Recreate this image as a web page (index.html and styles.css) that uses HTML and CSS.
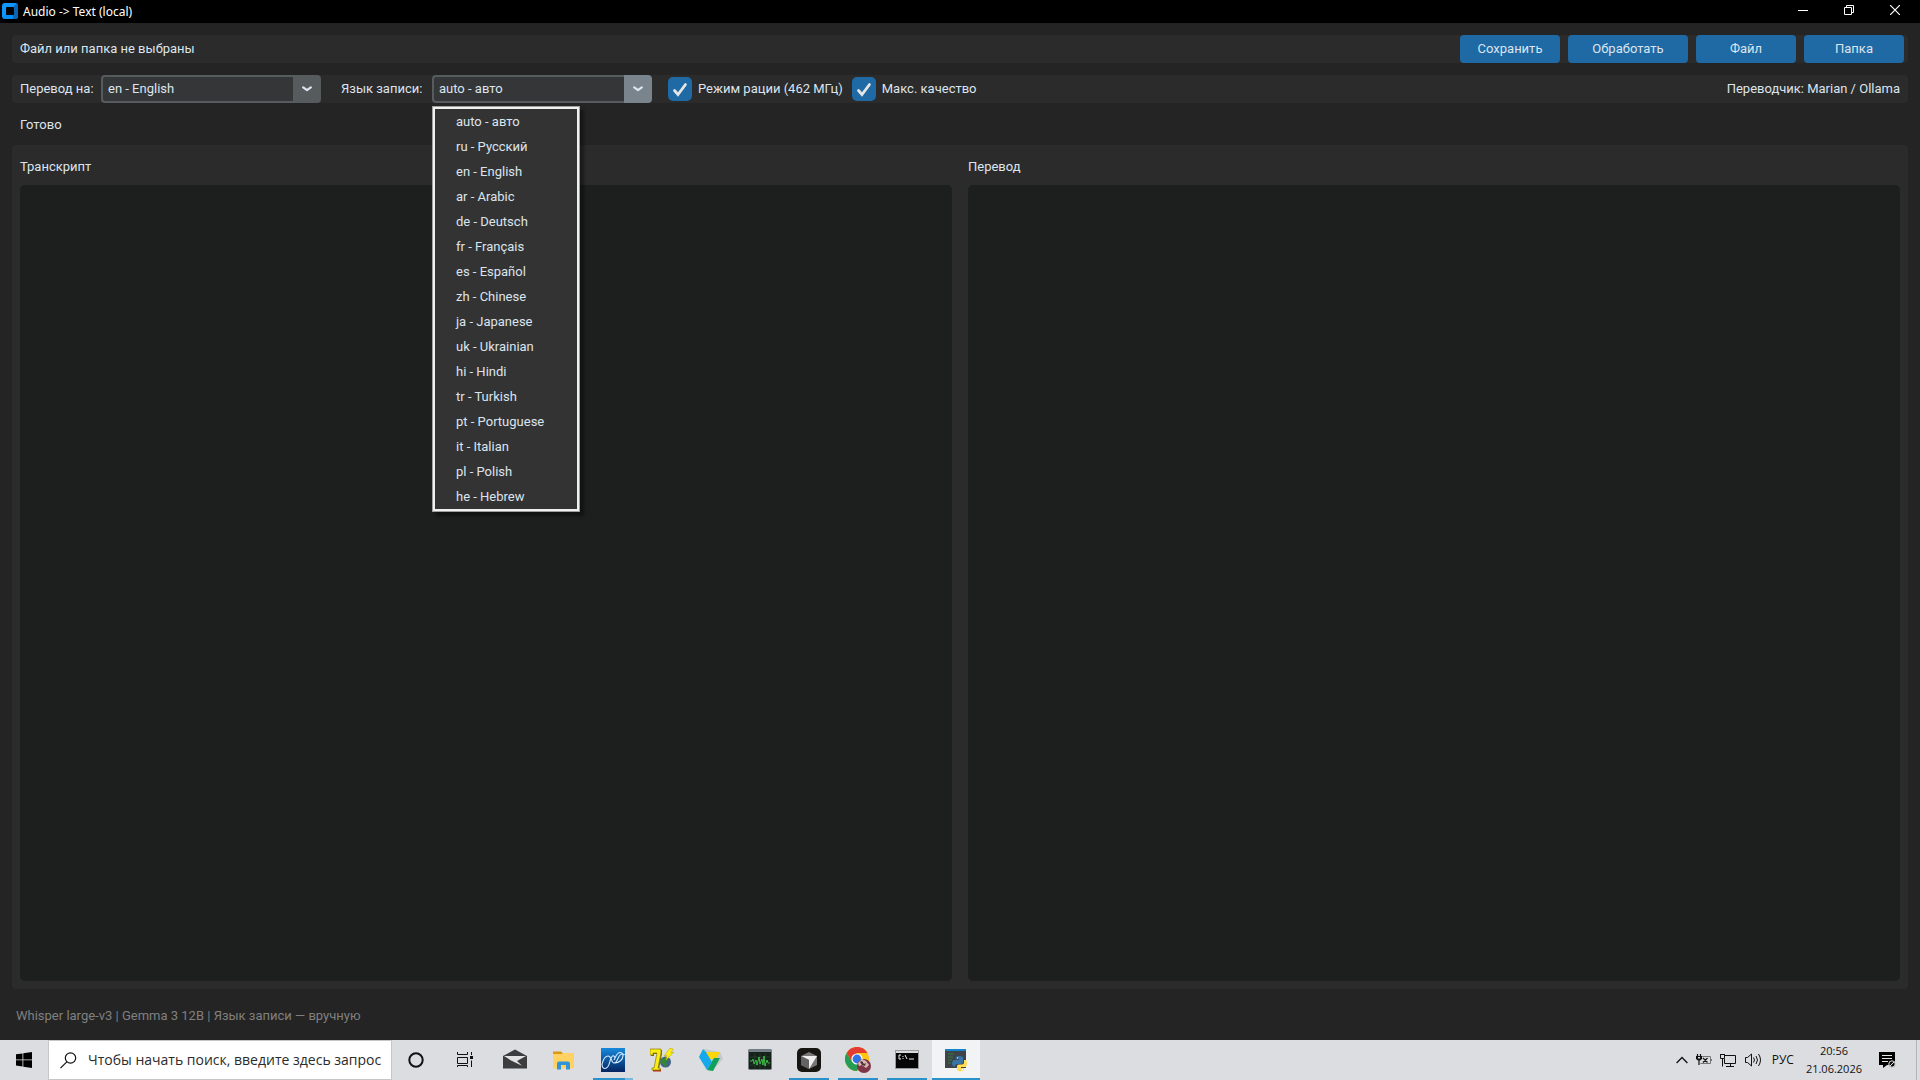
FILE: index.html
```html
<!DOCTYPE html>
<html lang="ru">
<head>
<meta charset="utf-8">
<meta name="viewport" content="width=device-width, initial-scale=1">
<title>Audio -&gt; Text (local)</title>
<link rel="stylesheet" href="styles.css">
</head>
<body>
<header class="titlebar">
  <svg class="app-icon" viewBox="0 0 16 16" aria-hidden="true"><rect width="16" height="16" rx="3" fill="#1097ff"/><path d="M12 2.500L15 1Q16 2 16 3v10q0 3-3 3H3l-1-1 3-3h7z" fill="#0866b5"/><path d="M2 13l3-2h6v5H3q-2 0-2-2z" fill="#078df3"/><rect x="4" y="4" width="8" height="8" rx="1" fill="#000"/></svg>
  <h1 class="window-title">Audio -&gt; Text (local)</h1>
  <div class="window-buttons">
    <button class="window-button" type="button" aria-label="Свернуть"><svg width="10" height="10" viewBox="0 0 10 10"><path d="M0 5.500h10" stroke="#fff"/></svg></button>
    <button class="window-button" type="button" aria-label="Восстановить"><svg width="10" height="10" viewBox="0 0 10 10" fill="none" stroke="#fff"><path d="M.5 2.500h7v7h-7zM2.500 2.500v-2h7v7h-2"/></svg></button>
    <button class="window-button" type="button" aria-label="Закрыть"><svg width="10" height="10" viewBox="0 0 10 10"><path d="M0 0l10 10M10 0L0 10" stroke="#fff" stroke-width="1.200"/></svg></button>
  </div>
</header>

<main class="app">
  <section class="bar file-bar">
    <span class="file-name">Файл или папка не выбраны</span>
    <button class="action" type="button">Сохранить</button>
    <button class="action action-wide" type="button">Обработать</button>
    <button class="action" type="button">Файл</button>
    <button class="action" type="button">Папка</button>
  </section>

  <section class="bar options-bar">
    <label class="target-label" for="target">Перевод на:</label>
    <div class="combo">
      <input class="combo-input" id="target" type="text" value="en - English">
      <button class="combo-button" type="button" aria-label="Выбрать язык перевода"><svg width="10" height="6" viewBox="0 0 10 6"><path d="M1.200 1.400L5 4.200 8.800 1.400" fill="none" stroke="#dce4ee" stroke-width="2.200" stroke-linecap="round" stroke-linejoin="round"/></svg></button>
    </div>
    <label class="source-label" for="source">Язык записи:</label>
    <div class="combo">
      <input class="combo-input" id="source" type="text" value="auto - авто">
      <button class="combo-button combo-button-active" type="button" aria-label="Выбрать язык записи" aria-expanded="true"><svg width="10" height="6" viewBox="0 0 10 6"><path d="M1.200 1.400L5 4.200 8.800 1.400" fill="none" stroke="#dce4ee" stroke-width="2.200" stroke-linecap="round" stroke-linejoin="round"/></svg></button>
      <ul class="menu" role="listbox" aria-label="Язык записи">
        <li class="menu-item" role="option">auto - авто</li>
        <li class="menu-item" role="option">ru - Русский</li>
        <li class="menu-item" role="option">en - English</li>
        <li class="menu-item" role="option">ar - Arabic</li>
        <li class="menu-item" role="option">de - Deutsch</li>
        <li class="menu-item" role="option">fr - Français</li>
        <li class="menu-item" role="option">es - Español</li>
        <li class="menu-item" role="option">zh - Chinese</li>
        <li class="menu-item" role="option">ja - Japanese</li>
        <li class="menu-item" role="option">uk - Ukrainian</li>
        <li class="menu-item" role="option">hi - Hindi</li>
        <li class="menu-item" role="option">tr - Turkish</li>
        <li class="menu-item" role="option">pt - Portuguese</li>
        <li class="menu-item" role="option">it - Italian</li>
        <li class="menu-item" role="option">pl - Polish</li>
        <li class="menu-item" role="option">he - Hebrew</li>
      </ul>
    </div>
    <div class="checks">
      <label class="check"><span class="tick"><input class="tick-box" type="checkbox" checked><svg class="tick-mark" viewBox="0 0 24 24"><path d="M6.500 13.500L10 17.500 17.500 7.500" fill="none" stroke="#e5e5e5" stroke-width="2.800" stroke-linecap="round"/></svg></span>Режим рации (462 МГц)</label>
      <label class="check"><span class="tick"><input class="tick-box" type="checkbox" checked><svg class="tick-mark" viewBox="0 0 24 24"><path d="M6.500 13.500L10 17.500 17.500 7.500" fill="none" stroke="#e5e5e5" stroke-width="2.800" stroke-linecap="round"/></svg></span>Макс. качество</label>
    </div>
    <span class="engine">Переводчик: Marian / Ollama</span>
  </section>

  <p class="status">Готово</p>

  <section class="panels">
    <div class="panel">
      <label class="panel-label" for="transcript">Транскрипт</label>
      <textarea class="panel-text" id="transcript"></textarea>
    </div>
    <div class="panel">
      <label class="panel-label" for="translation">Перевод</label>
      <textarea class="panel-text" id="translation"></textarea>
    </div>
  </section>

  <p class="footnote">Whisper large-v3 | Gemma 3 12B | Язык записи — вручную</p>
</main>

<footer class="taskbar">
  <button class="start" type="button" aria-label="Пуск"><svg width="16" height="16" viewBox="0 0 16 16"><path d="M0 2.300L6.500 1.400v6.100H0zM7.300 1.300L16 0v7.500H7.300zM0 8.300h6.500v6.200L0 13.600zM7.300 8.300H16V16l-8.700-1.300z"/></svg></button>
  <label class="search">
    <svg width="17" height="17" viewBox="0 0 17 17" fill="none" stroke="#111" stroke-width="1.200"><circle cx="10.500" cy="6" r="5.200"/><path d="M6.800 9.800L.5 16.200"/></svg>
    <input class="search-input" type="text" placeholder="Чтобы начать поиск, введите здесь запрос" aria-label="Поиск">
  </label>
  <nav class="tasks" aria-label="Панель задач">
    <button class="task" type="button" aria-label="Кортана"><svg width="24" height="24" viewBox="0 0 24 24"><circle cx="11" cy="12" r="6.700" fill="none" stroke="#111" stroke-width="2"/></svg></button>
    <button class="task" type="button" aria-label="Представление задач"><svg width="24" height="24" viewBox="0 0 24 24" fill="none" stroke="#111"><path d="M3.500 4v2.500h10V4M3.500 9.500h10v6h-10zM3.500 19v-1.500h10V19M17.500 4v3M17.500 12.500V19"/><path d="M16 8h3v3h-3z" fill="#111" stroke="none"/></svg></button>
    <button class="task" type="button" aria-label="Почта"><svg width="24" height="24" viewBox="0 0 24 24"><path d="M0 8L12 1.500 24 8v12.500H0z" fill="#3d3d3f"/><path d="M1 8h22l-9 5 5 4.800L8 12.500z" fill="#e3e3e5"/></svg></button>
    <button class="task" type="button" aria-label="Проводник"><svg width="24" height="24" viewBox="0 0 24 24"><path d="M1 3.500h8l2 2H21v5H1z" fill="#dc980e"/><path d="M1 6h9l1-1h11v15.500H1z" fill="#ffd263"/><path d="M5 21.500v-6q0-2 2-2h9q2 0 2 2v6h-4V17H9v4.500z" fill="#3094d8"/></svg></button>
    <button class="task task-open task-group" type="button" aria-label="Осциллограф"><svg width="24" height="24" viewBox="0 0 24 24"><defs><linearGradient id="wave" x1="0" y1="0" x2="0" y2="1"><stop offset="0" stop-color="#1789dc"/><stop offset="1" stop-color="#052360"/></linearGradient></defs><path fill="url(#wave)" d="M0 0h24v24H0z"/><path d="M1 16C2 13 3 8 7 8c4 0 3 7 6 7 4 0 4-9 8-9 1 0 2 0 2.500 1M1 16c0 3 1 4.500 3 4.500 5 0 4-8 7-12 1-1.500 3-.5 3 2M13 12c2-4 3-7.500 6-7.500 2 0 3 1 3 3 0 4-4 7.500-8 7.500" fill="none" stroke="#d4ecff" stroke-width="1.100"/></svg></button>
    <button class="task" type="button" aria-label="Семёрка"><svg width="24" height="24" viewBox="0 0 24 24"><path d="M1 2h11v4L9 21h2v2H3v-2h2L8 6H4v2H1z" fill="#7b6a00"/><path d="M0 1h11v4L8 20h2v2H2v-2h2L7 5H3v2H0z" fill="#f9ed13" stroke="#8b7900" stroke-width=".7"/><path d="M3 22.500h8v1H3z" fill="#c51e19"/><circle cx="15.500" cy="14" r="5.500" fill="#42618c"/><path d="M12 11l4-2 3 4-3 1 1 3-3 2-1-3-3-1z" fill="#338832"/><path d="M20 0l3 1-2 4 3-1-8 8 1-5-3 1z" fill="#ffee16" stroke="#b4a400" stroke-width=".5"/></svg></button>
    <button class="task" type="button" aria-label="Диск"><svg width="24" height="24" viewBox="0 0 24 24"><path d="M5 1l16 3 3 7-11 12-5-1L0 9z" fill="#c3c8ca"/><path d="M5 4h16l-4 7h-7z" fill="#fbd608"/><path d="M15 10h6l-7 13-6-1z" fill="#0fa05a"/><path d="M4 1l3 3 6 10-5 8L0 9z" fill="#15a9eb"/></svg></button>
    <button class="task" type="button" aria-label="Монитор"><svg width="24" height="24" viewBox="0 0 24 24"><rect x=".5" y="1.500" width="23" height="20" rx="1" fill="#152119" stroke="#747b80"/><path d="M1 2h22v2H1z" fill="#74808a"/><path d="M2 9h20M2 13h20M2 17h20M7 5v16M12 5v16M17 5v16" stroke="#31523a" stroke-width=".5"/><path d="M2 13h2l1-2 1 5 2-4 1 5 2-8 1 7 2-5 1 6 1-9 1 10 2-6 1 3h2" fill="none" stroke="#46d851" stroke-width=".8"/></svg></button>
    <button class="task task-open" type="button" aria-label="Редактор"><svg width="24" height="24" viewBox="0 0 24 24"><rect width="24" height="24" rx="5" fill="#171612"/><path d="M12 4l8 4v9l-8 4-8-4V8z" fill="#777"/><path d="M4 8h16l-8 13v-9z" fill="#eee"/><path d="M4 8l8 4v9l-8-4z" fill="#636363"/></svg></button>
    <button class="task task-open" type="button" aria-label="Браузер"><svg width="26" height="26" viewBox="0 0 26 26"><circle cx="12" cy="12" r="12" fill="#ffc511"/><path d="M1.600 6A12 12 0 0 1 22.500 6H12L7 15z" fill="#e43d30"/><path d="M1.600 6A12 12 0 0 0 12 24l4-9H7z" fill="#269d52"/><circle cx="12" cy="12" r="5.600" fill="#fff"/><circle cx="12" cy="12" r="4.400" fill="#3274e8"/><circle cx="19" cy="19" r="7" fill="#7d3547"/><path d="M13 16l4-4 4 2 3 4-3 3-4-3-3 1z" fill="#d9b8b1"/><path d="M15 15l2-1 2 3 2-1-1 3-3-1z" fill="#4c333b"/></svg></button>
    <button class="task task-open" type="button" aria-label="Командная строка"><svg width="24" height="24" viewBox="0 0 24 24"><rect x=".5" y="2.500" width="23" height="18" fill="#050505" stroke="#999"/><path d="M1 3h22v2H1z" fill="#d9dadb"/><path d="M6 7H4v4h2M8 8v1M8 10v1M10 7l2 4M14 11h5" fill="none" stroke="#eee"/></svg></button>
    <button class="task task-open task-current" type="button" aria-label="Audio -&gt; Text"><svg width="24" height="24" viewBox="0 0 24 24"><path d="M1 1h21v19H1z" fill="#3d444a"/><path d="M1 1h21v2H1z" fill="#1683ce"/><path d="M4 6h6M4 9h5M4 12h4M4 15h3" stroke="#397947"/><path d="M12 9q3-2 7 0v5q0 2-2 2h-4q-2 0-2 2.500H9.500q-3-3 0-6.500H15v-1h-3z" fill="#3774a7"/><path d="M20 12h2q2 3.500 0 7h-5v1h3v2q-4 2.500-7 0v-4q0-1.500 2-1.500h3q2 0 2-2z" fill="#ffdc50"/><path d="M13 9.500h1v1h-1zM18 21h1v1h-1z" fill="#fff"/></svg></button>
  </nav>
  <div class="tray">
    <button class="tray-button" type="button" aria-label="Скрытые значки"><svg width="12" height="8" viewBox="0 0 12 8"><path d="M.6 7L6 1.500 11.400 7" fill="none" stroke="#111" stroke-width="1.300"/></svg></button>
    <button class="tray-button" type="button" aria-label="Батарея"><svg width="16" height="12" viewBox="0 0 16 12" fill="none"><path d="M6 2.500h8.500v7H4.500M15.500 5v2" stroke="#777"/><path d="M1.500 0v2M4.500 0v2M3 6v5M7 4l4.500 4.500M11.500 4L7 8.500" stroke="#111" stroke-width="1.200"/><path d="M0 2h6v3L4 6.500H2L0 5z" fill="#111"/><path d="M2 3h2v1.500H2z" fill="#dcdde0"/></svg></button>
    <button class="tray-button" type="button" aria-label="Сеть"><svg width="17" height="15" viewBox="0 0 17 15" fill="none" stroke="#111"><path d="M5 2.500h10.500v8h-11V6M10.500 10.500v3M6 13.500h8M.5 1v4.500h4V1M0 1.500h5M2.500 6v7.500"/></svg></button>
    <button class="tray-button" type="button" aria-label="Громкость"><svg width="17" height="14" viewBox="0 0 17 14" fill="none" stroke="#111"><path d="M.5 4.500h2L6.500 1v12l-4-3.500h-2zM8.500 4.500q2 2.500 0 5M11 3q3 4 0 8M13.500 1q4 6 0 12"/></svg></button>
    <button class="tray-button lang" type="button">РУС</button>
    <time class="clock" datetime="2026-06-21T20:56"><span>20:56</span><span>21.06.2026</span></time>
    <button class="tray-button notices" type="button" aria-label="Уведомления"><svg width="17" height="16" viewBox="0 0 17 16"><path d="M0 0h16v13H8l-4 3v-3H0z"/><path d="M3 3.500h10M3 6.500h10M3 9.500h6" stroke="#e6e6e8"/><circle cx="13" cy="12" r="3.200" fill="#111" stroke="#ddd"/><path d="M11 14l4-4" stroke="#ddd"/></svg></button>
  </div>
</footer>
</body>
</html>
```
FILE: styles.css
```css
* {
  box-sizing: border-box;
}

body {
  display: flex;
  flex-direction: column;
  min-height: 100vh;
  margin: 0;
  background: #242424;
  color: #dce4ee;
  font: 13px/16px Roboto, "Noto Sans", sans-serif;
}

button,
input,
textarea {
  margin: 0;
  padding: 0;
  border: 0;
  color: inherit;
  font: inherit;
}

svg {
  display: block;
  flex: none;
}

/* Window title bar */
.titlebar {
  display: flex;
  height: 23px;
  padding-left: 2px;
  background: #000;
  color: #fff;
}

.app-icon {
  width: 16px;
  height: 16px;
  margin-top: 3px;
}

.window-title {
  flex: 1;
  margin: 0;
  padding-left: 5px;
  font: 12px/24px "Noto Sans", sans-serif;
}

.window-buttons {
  display: flex;
}

.window-button {
  display: grid;
  place-items: center;
  width: 46px;
  height: 20px;
  background: none;
}

.window-button:last-child {
  margin-right: 2px;
}

/* Application */
.app {
  display: flex;
  flex: 1;
  flex-direction: column;
  padding: 12px 12px 10px;
}

.bar {
  display: flex;
  align-items: center;
  height: 28px;
  margin-bottom: 12px;
  padding: 0 8px;
  border-radius: 4px;
  background: #2b2b2b;
}

.file-bar {
  gap: 8px;
  padding-right: 4px;
}

.file-name {
  flex: 1;
}

.action {
  width: 100px;
  height: 28px;
  border-radius: 4px;
  background: #1f6aa5;
}

.action-wide {
  width: 120px;
}

.options-bar {
  gap: 8px;
}

.target-label {
  width: 73px;
  white-space: nowrap;
}

.source-label {
  width: 83px;
  margin-left: 12px;
  white-space: nowrap;
}

.combo {
  position: relative;
  display: flex;
  width: 220px;
  height: 28px;
}

.combo-input {
  flex: 1;
  min-width: 0;
  padding: 0 5px;
  border: 2px solid #565b5e;
  border-right: 0;
  border-radius: 4px 0 0 4px;
  background: #343638;
}

.combo-button {
  display: grid;
  place-items: center;
  width: 28px;
  border-radius: 0 4px 4px 0;
  background: #565b5e;
}

.combo-button-active {
  background: #7a848d;
}

.menu {
  position: absolute;
  top: 31px;
  left: 0;
  z-index: 1;
  width: 148px;
  margin: 0;
  padding: 2px;
  border: 1px solid #a0a0a0;
  outline: 2px solid #f0f0f0;
  outline-offset: -3px;
  background: #333;
  box-shadow: 4px 4px 3px rgba(0, 0, 0, 0.4);
  list-style: none;
}

.menu-item {
  padding-left: 21px;
  line-height: 25px;
}

.checks {
  display: flex;
  flex: 1;
  gap: 9px;
  padding-left: 8px;
}

.check {
  display: flex;
  align-items: center;
  gap: 6px;
}

.tick {
  display: grid;
  width: 24px;
  height: 24px;
}

.tick-box,
.tick-mark {
  grid-area: 1 / 1;
  width: 24px;
  height: 24px;
}

.tick-box {
  appearance: none;
  border-radius: 5px;
  background: #1f6aa5;
}

.tick-mark {
  pointer-events: none;
}

.status {
  margin: 0;
  padding: 0 8px 10px;
  line-height: 20px;
}

.panels {
  display: grid;
  flex: 1;
  grid-template-columns: 1fr 1fr;
  gap: 16px;
  padding: 8px;
  border-radius: 4px;
  background: #2b2b2b;
}

.panel {
  display: flex;
  flex-direction: column;
}

.panel-label {
  padding-bottom: 4px;
  line-height: 28px;
}

.panel-text {
  flex: 1;
  padding: 8px;
  border-radius: 5px;
  background: #1d1e1e;
  resize: none;
}

.footnote {
  margin: 0;
  padding: 12px 4px 0;
  color: gray;
  line-height: 29px;
}

/* Taskbar */
.taskbar {
  display: flex;
  height: 40px;
  background: #dcdde0;
  color: #111;
  font-family: "Open Sans", "Noto Sans", sans-serif;
}

.start {
  display: grid;
  place-items: center;
  width: 48px;
  background: none;
}

.search {
  display: flex;
  align-items: center;
  gap: 11px;
  width: 344px;
  padding-left: 11px;
  border: 1px solid #c6c6c8;
  background: #fff;
}

.search-input {
  flex: 1;
  min-width: 0;
  background: none;
  font-size: 14px;
}

.search-input::placeholder {
  color: #2b2b2b;
  opacity: 1;
}

.tasks {
  display: flex;
  flex: 1;
  gap: 1px;
  padding-left: 1px;
}

.task {
  position: relative;
  display: grid;
  place-items: center;
  width: 48px;
  background: none;
}

.task-open::after {
  position: absolute;
  right: 4px;
  bottom: 0;
  left: 4px;
  height: 2px;
  background: #2b91cb;
  content: "";
}

.task-group::after {
  background: linear-gradient(90deg, #2b91cb 80%, #78b9df 80%);
}

.task-current {
  background: #f2f3f4;
}

.task-current::after {
  right: 0;
  left: 0;
}

.tray {
  display: flex;
  align-items: center;
  gap: 8px;
  margin-right: 3px;
  padding-right: 20px;
  border-right: 1px solid #b4b4b7;
  font-size: 12px;
}

.tray-button {
  background: none;
}

.lang {
  padding-left: 2px;
}

.clock {
  display: flex;
  flex-direction: column;
  align-items: center;
  padding: 0 9px 0 4px;
  font-size: 11px;
  line-height: 18px;
}
```
